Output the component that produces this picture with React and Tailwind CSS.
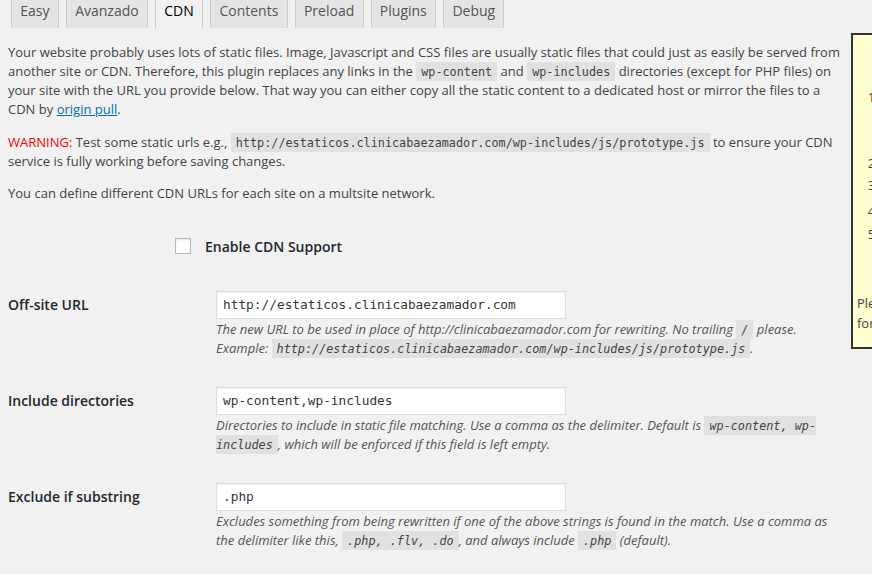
const tabs = ["Easy", "Avanzado", "CDN", "Contents", "Preload", "Plugins", "Debug"];

function Code({ children }) {
  return (
    <code className="bg-[#e1e1e1] px-[5px] pt-[3px] pb-[2px] font-['DejaVu_Sans_Mono',monospace] text-[11.8px] leading-none text-[#444]">
      {children}
    </code>
  );
}

function Field({ label, value, children }) {
  return (
    <div className="grid h-[96px] grid-cols-[208px_1fr]">
      <div className="pt-[4px] text-[14px] leading-[20px] font-semibold text-[#23282d]">{label}</div>
      <div>
        <div className="flex h-[28px] w-[350px] items-center border border-[#ddd] bg-white px-[6px] font-['DejaVu_Sans_Mono',monospace] text-[12.8px] text-[#32373c] shadow-[inset_0_1px_2px_rgba(0,0,0,0.07)]">
          {value}
        </div>
        <p className="mt-[1px] w-[620px] text-[13px] leading-[18.5px] italic text-[#555]">{children}</p>
      </div>
    </div>
  );
}

export default function App() {
  return (
    <div className="flex h-[574px] w-[872px] overflow-hidden bg-[#f1f1f1] font-['Open_Sans',sans-serif] text-[13px] text-[#444]">
      <div className="w-[851px] shrink-0 pl-[8px] pr-[7px]">
        <div className="-mt-[8px] flex gap-[7px] pl-[3px]">
          {tabs.map((t) => (
            <div
              key={t}
              className={
                "flex h-[36px] items-center border border-b-0 border-[#ccc] px-[8.3px] text-[14px] font-normal " +
                (t === "CDN" ? "bg-[#f1f1f1] text-black" : "bg-[#e4e4e4] text-[#555]")
              }
            >
              {t}
            </div>
          ))}
        </div>

        <p className="mt-[15px] leading-[19px]">
          Your website probably uses lots of static files. Image, Javascript and CSS files are usually static files that
          could just as easily be served from another site or CDN. Therefore, this plugin replaces any links in the{" "}
          <Code>wp-content</Code> and <Code>wp-includes</Code> directories (except for PHP files) on your site with the
          URL you provide below. That way you can either copy all the static content to a dedicated host or mirror the
          files to a CDN by{" "}
          <a href="#" className="text-[#0073aa] underline">
            origin pull
          </a>
          .
        </p>
        <p className="mt-[14px] leading-[19px]">
          <span className="text-[#ff0000]">WARNING:</span> Test some static urls e.g.,{" "}
          <Code>http://estaticos.clinicabaezamador.com/wp-includes/js/prototype.js</Code> to ensure your CDN service is
          fully working before saving changes.
        </p>
        <p className="mt-[13px] leading-[19px]">You can define different CDN URLs for each site on a multsite network.</p>

        <div className="mt-[33px] flex h-[20px] items-center pl-[167px]">
          <span className="h-[16px] w-[16px] border border-[#b4b9be] bg-white shadow-[inset_0_1px_2px_rgba(0,0,0,0.1)]" />
          <span className="ml-[14px] text-[14px] font-semibold text-[#23282d]">Enable CDN Support</span>
        </div>

        <div className="mt-[35px]">
          <Field label="Off-site URL" value="http://estaticos.clinicabaezamador.com">
            The new URL to be used in place of http://clinicabaezamador.com for rewriting. No trailing{" "}
            <Code>/</Code> please.
            <br />
            Example: <Code>http://estaticos.clinicabaezamador.com/wp-includes/js/prototype.js</Code>.
          </Field>
          <Field label="Include directories" value="wp-content,wp-includes">
            Directories to include in static file matching. Use a comma as the delimiter. Default is{" "}
            <Code>wp-content, wp-includes</Code>, which will be enforced if this field is left empty.
          </Field>
          <Field label="Exclude if substring" value=".php">
            Excludes something from being rewritten if one of the above strings is found in the match. Use a comma as
            the delimiter like this, <Code>.php, .flv, .do</Code>, and always include <Code>.php</Code> (default).
          </Field>
        </div>
      </div>

      <div className="mt-[33px] h-[316px] w-[260px] shrink-0 overflow-hidden border-2 border-[#333] bg-[#ffffd2] pl-[4px] text-[13px] leading-[19px] text-[#444]">
        <ol className="mt-[53px] list-decimal pl-[25px]">
          <li className="mb-[9px]">
            Create a pull zone
            <br />
            pointing at your
            <br />
            origin site.
          </li>
          <li className="mb-[3px]">Copy the URL.</li>
          <li className="mb-[7px]">Paste it below.</li>
          <li className="mb-[4px]">Save changes.</li>
          <li>Test it.</li>
        </ol>
        <p className="mt-[49px] leading-[20px]">
          Please test
          <br />
          for errors.
        </p>
      </div>
    </div>
  );
}
